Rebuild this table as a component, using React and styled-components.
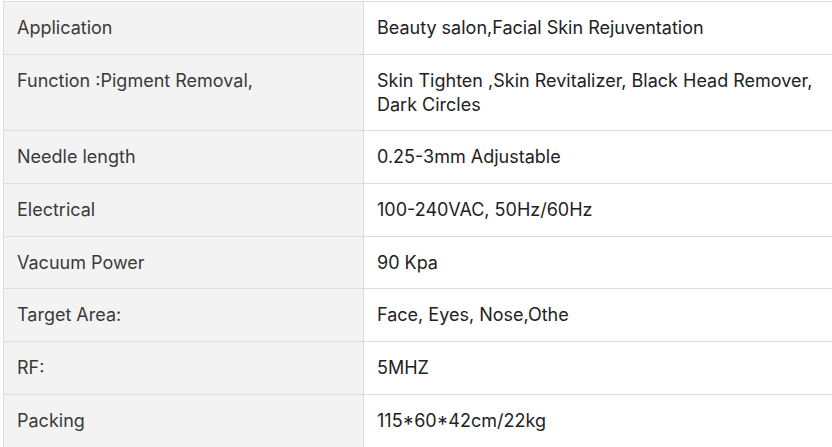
import React from 'react'
import styled, { createGlobalStyle } from 'styled-components'

const rows = [
  ['Application', 'Beauty salon,Facial Skin Rejuventation'],
  ['Function :Pigment Removal,', 'Skin Tighten ,Skin Revitalizer, Black Head Remover, Dark Circles'],
  ['Needle length', '0.25-3mm Adjustable'],
  ['Electrical', '100-240VAC, 50Hz/60Hz'],
  ['Vacuum Power', '90 Kpa'],
  ['Target Area:', 'Face, Eyes, Nose,Othe'],
  ['RF:', '5MHZ'],
  ['Packing', '115*60*42cm/22kg']
]

const GlobalStyle = createGlobalStyle`
  html, body {
    margin: 0;
    background: #fff;
    overflow: hidden;
  }
  body {
    font-family: Inter, "Noto Sans", sans-serif;
  }
`

const Page = styled.div`
  padding: 1px 0 0 3px;
  width: 832px;
  height: 447px;
  overflow: hidden;
  box-sizing: border-box;
`

const SpecTable = styled.table`
  border-collapse: collapse;
  width: 848px;
  table-layout: fixed;
  font-size: 18px;
  line-height: 24px;
`

const Cell = styled.td`
  border: 1px solid #dcdcdc;
  padding: 14px 13px 13.7px 13px;
  vertical-align: top;
  background: ${p => (p.$label ? '#f3f3f3' : '#fff')};
  color: ${p => (p.$label ? '#3a3a3a' : '#222')};
  width: ${p => (p.$label ? '360px' : 'auto')};
  box-sizing: border-box;
`

const App = () => (
  <>
    <GlobalStyle />
    <Page>
      <SpecTable>
        <tbody>
          {rows.map(([label, value]) => (
            <tr key={label}>
              <Cell $label>{label}</Cell>
              <Cell>{value}</Cell>
            </tr>
          ))}
        </tbody>
      </SpecTable>
    </Page>
  </>
)

export default App
